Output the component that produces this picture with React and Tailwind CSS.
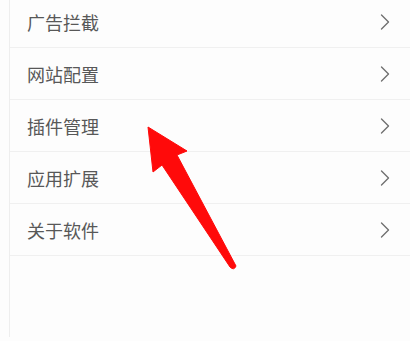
import React from "react";

const items = ["广告拦截", "网站配置", "插件管理", "应用扩展", "关于软件"];

const Chevron = () => (
  <svg width="10" height="16" viewBox="0 0 10 16" fill="none">
    <path
      d="M1.5 1L8.5 8L1.5 15"
      stroke="#707070"
      strokeWidth="1.4"
      strokeLinecap="round"
      strokeLinejoin="round"
    />
  </svg>
);

export default function App() {
  return (
    <div className="relative w-[410px] h-[341px] overflow-hidden bg-[#fdfdfd] font-['Noto_Sans_CJK_SC',sans-serif]">
      <div className="ml-[9px] h-full border-l border-[#eeeeee]">
        <ul className="-mt-[4px]">
          {items.map((label) => (
            <li
              key={label}
              className="flex h-[52px] items-center justify-between border-b border-[#f0f0f0] pl-[17px] pr-[20px]"
            >
              <span className="text-[18px] leading-none text-[#585858]">{label}</span>
              <Chevron />
            </li>
          ))}
        </ul>
      </div>

      {/* red annotation arrow */}
      <svg
        className="absolute left-0 top-0"
        width="410"
        height="341"
        viewBox="0 0 410 341"
      >
        <path
          d="M148 127 L187 151 L177 155 L236 266 Q234 271 230 267 L162 165 L153 172 Z"
          fill="#ff0a0a"
          stroke="#ff0a0a"
          strokeWidth="1"
          strokeLinejoin="round"
        />
      </svg>
    </div>
  );
}
